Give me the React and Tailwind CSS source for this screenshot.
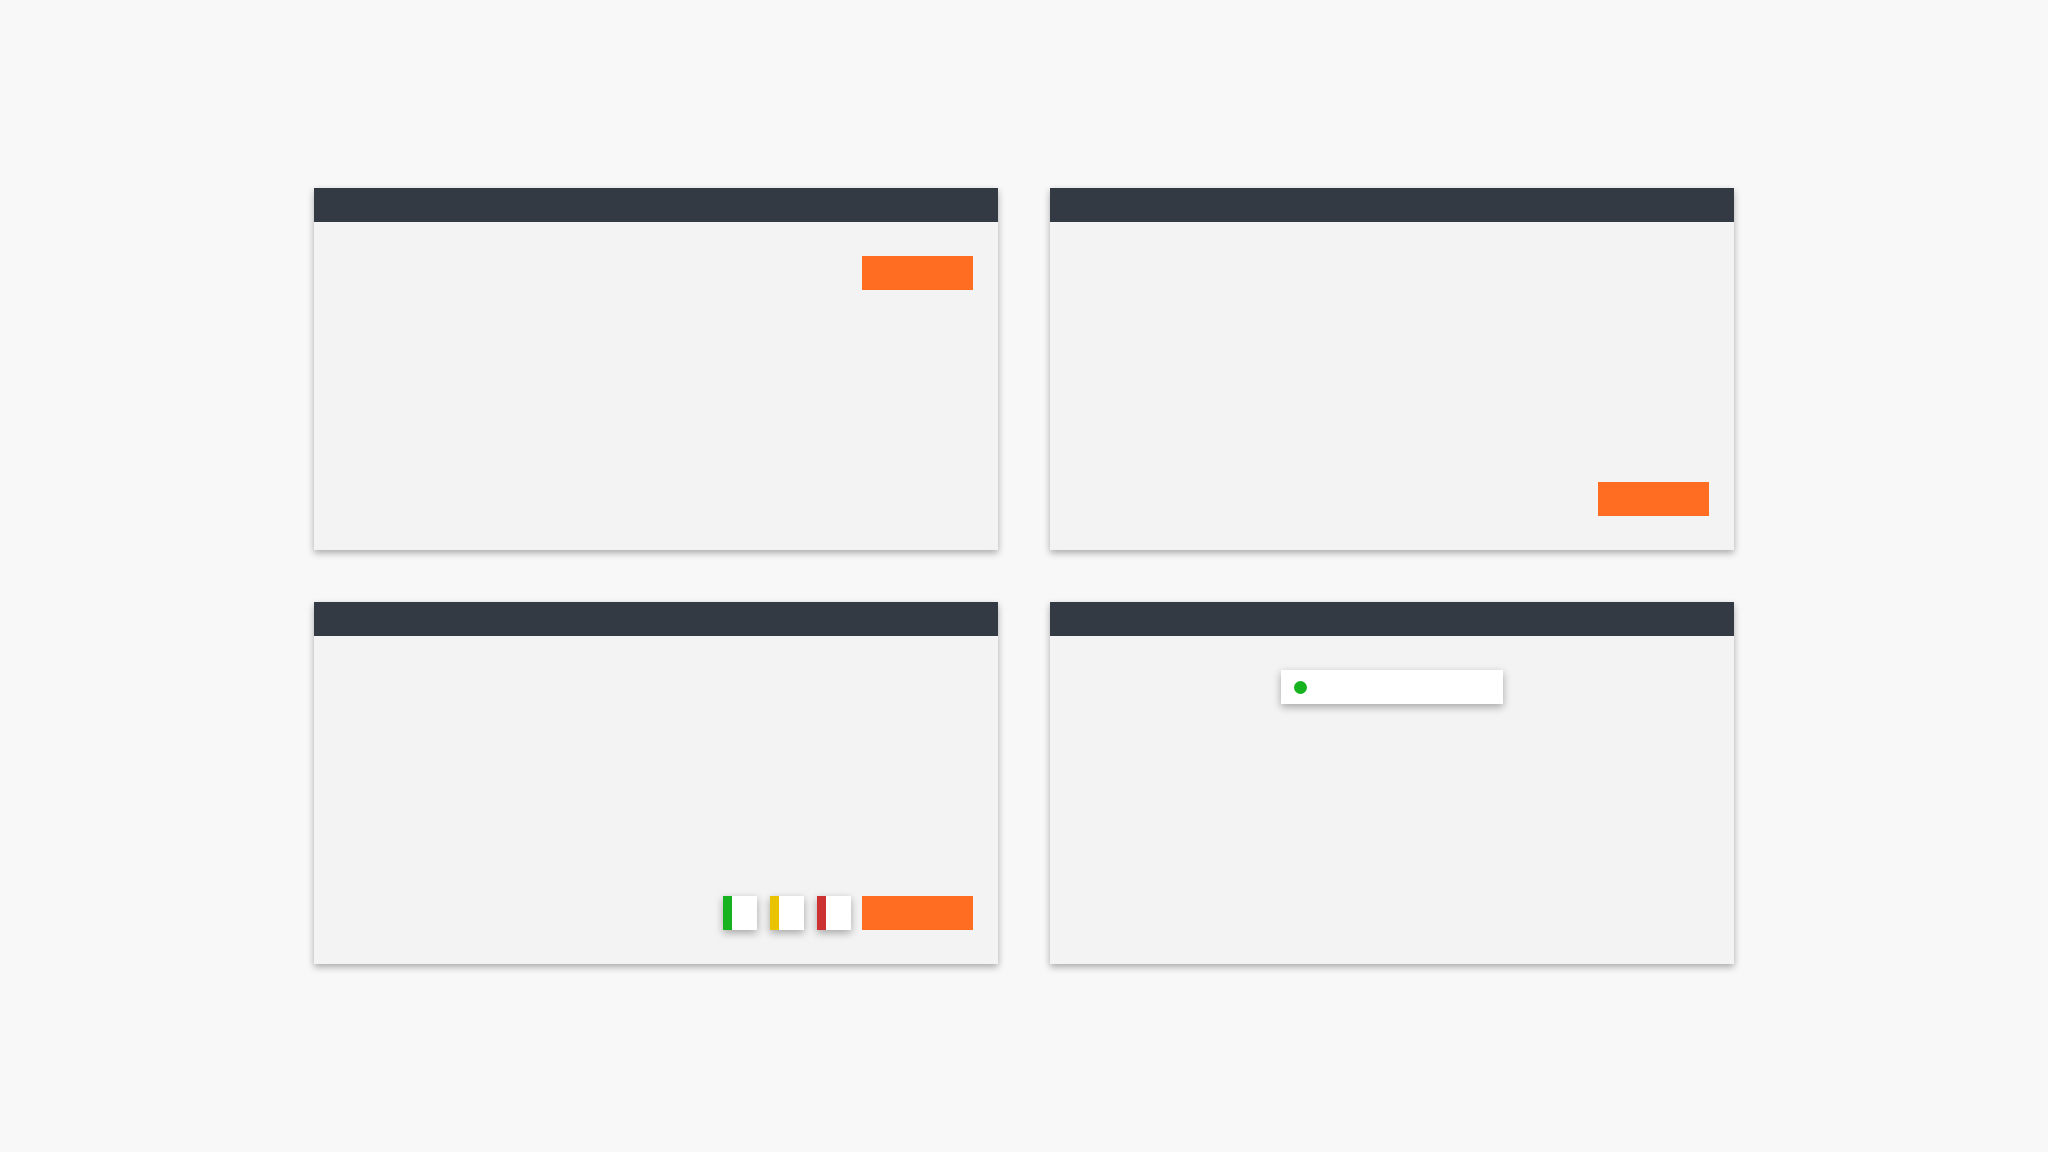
import React from 'react';

function Panel({ children, className = '' }) {
  return (
    <div className="flex h-[362px] w-[684px] flex-col bg-[#f3f3f3] shadow-[0_3px_7px_rgba(0,0,0,0.32)]">
      <div className="h-[34px] bg-[#333a44]"></div>
      <div className={`flex flex-1 px-[25px] py-[34px] ${className}`}>{children}</div>
    </div>
  );
}

function OrangeButton() {
  return <div className="h-[34px] w-[111px] bg-[#ff6d22]"></div>;
}

function StatusSquare({ color }) {
  return (
    <div className="flex h-[34px] w-[34px] bg-white shadow-[0_3px_8px_rgba(0,0,0,0.32)]">
      <div className={`h-full w-[9px] ${color}`}></div>
    </div>
  );
}

export default function App() {
  return (
    <div className="flex min-h-screen items-center justify-center bg-[#f8f8f8] font-['Liberation_Sans',sans-serif]">
      <div className="grid grid-cols-[684px_684px] gap-[52px]">
        <Panel className="items-start justify-end">
          <OrangeButton />
        </Panel>

        <Panel className="items-end justify-end">
          <OrangeButton />
        </Panel>

        <Panel className="items-end justify-end">
          <div className="flex items-center gap-[13px]">
            <StatusSquare color="bg-[#17b21f]" />
            <StatusSquare color="bg-[#e9c300]" />
            <StatusSquare color="bg-[#cc3232]" />
            <div className="ml-[-2px]">
              <OrangeButton />
            </div>
          </div>
        </Panel>

        <Panel className="items-start justify-center">
          <div className="flex h-[34px] w-[222px] items-center bg-white pl-[13px] shadow-[0_3px_8px_rgba(0,0,0,0.32)]">
            <div className="h-[13px] w-[13px] rounded-full bg-[#17b21f]"></div>
          </div>
        </Panel>
      </div>
    </div>
  );
}
